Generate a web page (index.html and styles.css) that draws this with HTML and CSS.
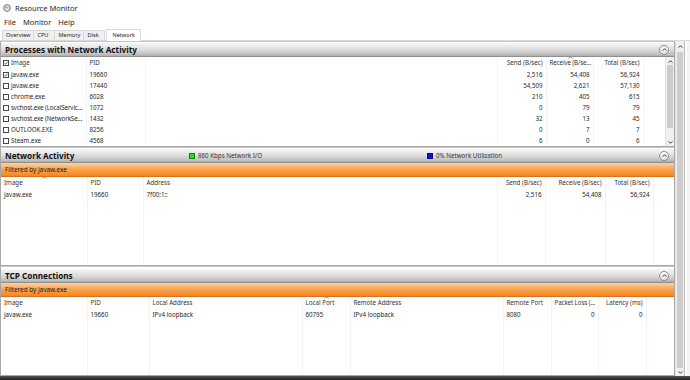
FILE: index.html
```html
<!DOCTYPE html>
<html lang="en">

<head>
	<meta charset="UTF-8">
	<title>Resource Monitor</title>
	<link rel="stylesheet" href="styles.css">
</head>

<body>
	<div class="window">
		<!-- Title + menu -->
		<div class="titlebar">
			<svg class="app-icon" viewBox="0 0 8 8">
				<circle cx="4" cy="4" r="3.4" fill="#e9e9e9" stroke="#6b6b6b" stroke-width="0.9" />
				<path d="M1.8 4.6 A2.3 2.3 0 0 1 6.2 4.6" fill="none" stroke="#9a9a9a" stroke-width="0.7" />
				<path d="M4 4.6 L2.6 2.6" stroke="#c0392b" stroke-width="0.8" />
			</svg>
			<span>Resource Monitor</span>
		</div>
		<div class="menubar">
			<span>File</span>
			<span>Monitor</span>
			<span>Help</span>
		</div>
		<div class="tabs">
			<span class="tab">Overview</span>
			<span class="tab">CPU</span>
			<span class="tab">Memory</span>
			<span class="tab">Disk</span>
			<span class="tab active">Network</span>
		</div>

		<div class="main">
			<div class="panels">
				<!-- Processes -->
				<section class="panel panel-processes">
					<div class="panel-head">
						<span class="panel-title">Processes with Network Activity</span>
						<span class="collapse"><svg viewBox="0 0 5 3"><path d="M0.6 2.6 L2.5 0.7 L4.4 2.6" /></svg></span>
					</div>
					<div class="panel-body">
						<div class="grid">
							<table>
								<colgroup>
									<col style="width:85px"><col style="width:59px"><col style="width:352px">
									<col style="width:49px"><col style="width:47px"><col style="width:50px"><col>
								</colgroup>
								<tr class="head">
									<th><span class="cb on"><svg viewBox="0 0 5 5"><path d="M0.7 2.6 L2 3.9 L4.3 1.1" /></svg></span>Image</th>
									<th>PID</th>
									<th></th>
									<th class="num">Send (B/sec)</th>
									<th class="tight"><span class="sort"><svg viewBox="0 0 5 3"><path d="M0.6 2.6 L2.5 0.7 L4.4 2.6" /></svg></span>Receive (B/se...</th>
									<th class="num">Total (B/sec)</th>
									<th class="end"></th>
								</tr>
								<tr>
									<td><span class="cb on"><svg viewBox="0 0 5 5"><path d="M0.7 2.6 L2 3.9 L4.3 1.1" /></svg></span>javaw.exe</td>
									<td>19660</td><td></td><td class="num">2,516</td><td class="num">54,408</td><td class="num">56,924</td><td class="end"></td>
								</tr>
								<tr>
									<td><span class="cb"></span>javaw.exe</td>
									<td>17440</td><td></td><td class="num">54,509</td><td class="num">2,621</td><td class="num">57,130</td><td class="end"></td>
								</tr>
								<tr>
									<td><span class="cb"></span>chrome.exe</td>
									<td>6028</td><td></td><td class="num">210</td><td class="num">405</td><td class="num">615</td><td class="end"></td>
								</tr>
								<tr>
									<td class="tight"><span class="cb"></span>svchost.exe (LocalServic...</td>
									<td>1072</td><td></td><td class="num">0</td><td class="num">79</td><td class="num">79</td><td class="end"></td>
								</tr>
								<tr>
									<td class="tight"><span class="cb"></span>svchost.exe (NetworkSe...</td>
									<td>1432</td><td></td><td class="num">32</td><td class="num">13</td><td class="num">45</td><td class="end"></td>
								</tr>
								<tr>
									<td><span class="cb"></span>OUTLOOK.EXE</td>
									<td>8256</td><td></td><td class="num">0</td><td class="num">7</td><td class="num">7</td><td class="end"></td>
								</tr>
								<tr>
									<td><span class="cb"></span>Steam.exe</td>
									<td>4568</td><td></td><td class="num">6</td><td class="num">0</td><td class="num">6</td><td class="end"></td>
								</tr>
							</table>
						</div>
						<div class="vscroll inner">
							<span class="arrow"><svg viewBox="0 0 5 3"><path d="M0.6 2.6 L2.5 0.7 L4.4 2.6" /></svg></span>
							<span class="thumb"></span>
							<span class="arrow down"><svg viewBox="0 0 5 3"><path d="M0.6 2.6 L2.5 0.7 L4.4 2.6" /></svg></span>
						</div>
					</div>
				</section>

				<!-- Network activity -->
				<section class="panel panel-activity">
					<div class="panel-head">
						<span class="panel-title activity-title">Network Activity</span>
						<span class="legend io"><i class="swatch green"></i>860 Kbps Network I/O</span>
						<span class="legend"><i class="swatch blue"></i>0% Network Utilization</span>
						<span class="collapse"><svg viewBox="0 0 5 3"><path d="M0.6 2.6 L2.5 0.7 L4.4 2.6" /></svg></span>
					</div>
					<div class="filter">Filtered by javaw.exe</div>
					<div class="grid">
						<table>
							<colgroup>
								<col style="width:86px"><col style="width:56px"><col style="width:354px">
								<col style="width:48px"><col style="width:60px"><col style="width:48px"><col>
							</colgroup>
							<tr class="head">
								<th><span class="sort"><svg viewBox="0 0 5 3"><path d="M0.6 2.6 L2.5 0.7 L4.4 2.6" /></svg></span>Image</th>
								<th>PID</th>
								<th>Address</th>
								<th class="num">Send (B/sec)</th>
								<th class="num">Receive (B/sec)</th>
								<th class="num">Total (B/sec)</th>
								<th class="end"></th>
							</tr>
							<tr>
								<td>javaw.exe</td><td>19660</td><td>7f00:1::</td>
								<td class="num">2,516</td><td class="num">54,408</td><td class="num">56,924</td><td class="end"></td>
							</tr>
							<tr class="filler">
								<td></td><td></td><td></td><td></td><td></td><td></td><td class="end"></td>
							</tr>
						</table>
					</div>
				</section>

				<!-- TCP -->
				<section class="panel panel-tcp">
					<div class="panel-head">
						<span class="panel-title">TCP Connections</span>
						<span class="collapse"><svg viewBox="0 0 5 3"><path d="M0.6 2.6 L2.5 0.7 L4.4 2.6" /></svg></span>
					</div>
					<div class="filter">Filtered by javaw.exe</div>
					<div class="grid">
						<table>
							<colgroup>
								<col style="width:86px"><col style="width:62px"><col style="width:153px"><col style="width:48px">
								<col style="width:153px"><col style="width:48px"><col style="width:47px"><col style="width:48px"><col>
							</colgroup>
							<tr class="head">
								<th>Image</th>
								<th>PID</th>
								<th>Local Address</th>
								<th><span class="sort"><svg viewBox="0 0 5 3"><path d="M0.6 2.6 L2.5 0.7 L4.4 2.6" /></svg></span>Local Port</th>
								<th>Remote Address</th>
								<th>Remote Port</th>
								<th class="tight">Packet Loss (...</th>
								<th class="num">Latency (ms)</th>
								<th class="end"></th>
							</tr>
							<tr>
								<td>javaw.exe</td><td>19660</td><td>IPv4 loopback</td><td>60795</td>
								<td>IPv4 loopback</td><td>8080</td><td class="num">0</td><td class="num">0</td><td class="end"></td>
							</tr>
							<tr class="filler">
								<td></td><td></td><td></td><td></td><td></td><td></td><td></td><td></td><td class="end"></td>
							</tr>
						</table>
					</div>
				</section>
			</div>

			<div class="vscroll outer">
				<span class="arrow"><svg viewBox="0 0 5 3"><path d="M0.6 2.6 L2.5 0.7 L4.4 2.6" /></svg></span>
				<span class="thumb"></span>
				<span class="arrow down"><svg viewBox="0 0 5 3"><path d="M0.6 2.6 L2.5 0.7 L4.4 2.6" /></svg></span>
			</div>
			<div class="edge"></div>
		</div>

		<div class="taskbar-edge"></div>
	</div>
</body>

</html>
```

FILE: styles.css
```css
* {
	box-sizing: border-box;
}

body {
	margin: 0;
	width: 690px;
	height: 380px;
	overflow: hidden;
	font-family: "Noto Sans", "Open Sans", sans-serif;
	color: #1e1e1e;
	background: #fff;
}

.window {
	display: flex;
	flex-direction: column;
	height: 380px;
}

/* Title bar + menu */
.titlebar {
	height: 16px;
	display: flex;
	align-items: center;
	gap: 4px;
	padding-left: 3px;
	font-size: 7.5px;
}

.app-icon {
	width: 8px;
	height: 8px;
}

.menubar {
	height: 12px;
	display: flex;
	align-items: center;
	gap: 7px;
	padding-left: 4px;
	font-size: 7.5px;
}

.tabs {
	height: 13px;
	display: flex;
	align-items: flex-end;
	padding-left: 2px;
	border-bottom: 1px solid #d9d9d9;
	font-size: 5.6px;
}

.tab {
	height: 10px;
	min-width: 22px;
	padding: 0 3px;
	line-height: 9px;
	background: #f0f0f0;
	border: 1px solid #d9d9d9;
	border-bottom: none;
	margin-right: -1px;
}

.tab.active {
	height: 12px;
	margin-left: 2px;
	padding: 0 5px;
	line-height: 11px;
	background: #fff;
	margin-bottom: -1px;
}

/* Main area */
.main {
	flex: 1;
	display: flex;
	min-height: 0;
}

.panels {
	width: 675px;
	display: flex;
	flex-direction: column;
}

.panel {
	display: flex;
	flex-direction: column;
	min-height: 0;
	border: 1px solid #a9a9a9;
	border-top-color: #c6c6c6;
}

.panel-processes {
	height: 106px;
}

.panel-activity {
	height: 119px;
}

.panel-tcp {
	flex: 1;
	padding-top: 1px;
}

.panel-head {
	flex: none;
	height: 15px;
	display: flex;
	align-items: center;
	padding: 0 5px 0 4px;
	background: linear-gradient(#f6f6f6, #e0e0e0 45%, #c2c2c2 85%, #adadad);
	border-top: 1px solid #fff;
	border-bottom: 1px solid #8f8f8f;
}

.panel-title {
	font-size: 8.2px;
	font-weight: bold;
	color: #111;
}

.activity-title {
	width: 184px;
}

.legend {
	display: flex;
	align-items: center;
	gap: 3px;
	font-size: 6.2px;
	color: #333;
}

.legend.io {
	width: 238px;
}

.swatch {
	width: 6px;
	height: 6px;
	border: 1px solid #555;
}

.swatch.green {
	background: #1ee01e;
	border-color: #128012;
}

.swatch.blue {
	background: #1010d8;
	border-color: #0a0a70;
}

.collapse {
	margin-left: auto;
	width: 10px;
	height: 10px;
	border-radius: 50%;
	border: 1px solid #8c8c8c;
	background: linear-gradient(#ffffff, #e2e2e2);
	display: flex;
	align-items: center;
	justify-content: center;
}

.collapse svg,
.vscroll svg,
.sort svg {
	width: 5px;
	height: 3px;
}

.collapse path,
.vscroll path,
.sort path {
	fill: none;
	stroke: #333;
	stroke-width: 1;
}

.filter {
	flex: none;
	height: 14px;
	padding-left: 4px;
	line-height: 13px;
	font-size: 6.4px;
	color: #1a1a1a;
	background: linear-gradient(#fcd3a4, #f9ab58 40%, #f79234 80%, #f5861f);
	border-bottom: 1px solid #d9721a;
}

.panel-body {
	flex: 1;
	display: flex;
	min-height: 0;
}

/* Tables */
.grid {
	flex: 1;
	min-height: 0;
	overflow: hidden;
}

table {
	width: 100%;
	height: 100%;
	border-collapse: collapse;
	table-layout: fixed;
	font-size: 6.2px;
	color: #262626;
}

th,
td {
	height: 11px;
	padding: 0 3px;
	line-height: 10px;
	white-space: nowrap;
	overflow: hidden;
	text-overflow: ellipsis;
	text-align: left;
	font-weight: normal;
	border-right: 1px solid #f1f3f8;
	vertical-align: middle;
}

th {
	height: 12px;
	position: relative;
	color: #333;
}

.num {
	text-align: right;
}

.tight {
	padding-right: 0;
	text-overflow: clip;
	letter-spacing: -0.1px;
}

.end {
	border-right: none;
}

tr.filler td {
	height: auto;
}

.cb {
	display: inline-block;
	width: 6px;
	height: 6px;
	margin: 0 2px 0 -1px;
	border: 1px solid #4a4a4a;
	background: #fff;
	vertical-align: -1px;
	position: relative;
}

.cb svg {
	position: absolute;
	left: 0;
	top: 0;
	width: 4px;
	height: 4px;
}

.cb path {
	fill: none;
	stroke: #222;
	stroke-width: 0.9;
}

.sort {
	position: absolute;
	top: -1px;
	left: 50%;
	margin-left: -2px;
	line-height: 0;
}

.sort path {
	stroke: #888;
}

/* Scrollbars */
.vscroll {
	flex: none;
	width: 9px;
	display: flex;
	flex-direction: column;
	align-items: center;
	background: #f0f0f0;
	border-left: 1px solid #e2e2e2;
}

.vscroll .arrow {
	height: 8px;
	display: flex;
	align-items: center;
	justify-content: center;
}

.vscroll .down svg {
	transform: rotate(180deg);
}

.vscroll .thumb {
	width: 6px;
	background: #cdcdcd;
}

.inner .thumb {
	height: 63px;
	margin-bottom: auto;
}

.outer {
	padding-top: 1px;
}

.outer .thumb {
	flex: 1;
	margin-top: 2px;
}

.edge {
	flex: 1;
	background: #f3f3f3;
	border-left: 1px solid #bdbdbd;
	box-shadow: inset 2px 0 0 #fff;
}

.taskbar-edge {
	height: 4px;
	background: linear-gradient(#555, #222);
}
```
